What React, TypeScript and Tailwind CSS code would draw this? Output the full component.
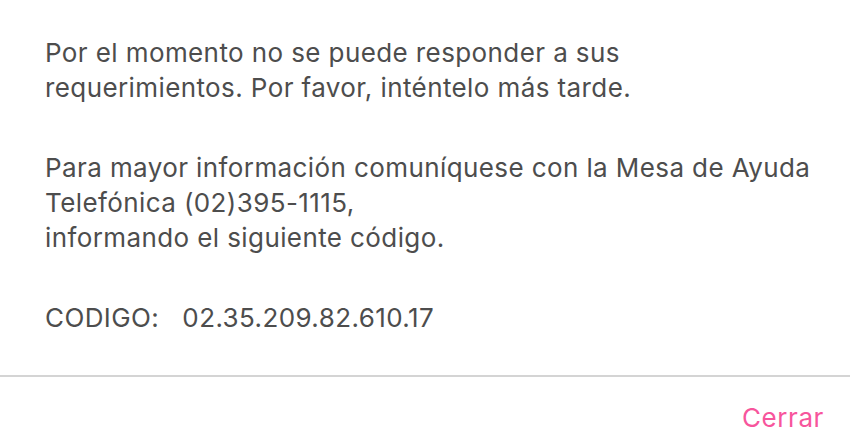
export default function App() {
  return (
    <div className="w-[850px] h-[446px] bg-white font-['Inter','Roboto',sans-serif] text-[#4d4d4d] tracking-[0.4px] flex flex-col">
      <div className="px-[45px] pt-[35px] text-[26px] leading-[35px] whitespace-nowrap">
        <p>
          Por el momento no se puede responder a sus
          <br />
          requerimientos. Por favor, inténtelo más tarde.
        </p>
        <p className="mt-[45px]">
          Para mayor información comuníquese con la Mesa de Ayuda
          <br />
          Telefónica (02)395-1115,
          <br />
          informando el siguiente código.
        </p>
        <p className="mt-[45px]">
          CODIGO:&nbsp;&nbsp;&nbsp;02.35.209.82.610.17
        </p>
      </div>
      <div className="mt-auto border-t-2 border-[#d4d4d4] h-[71px] flex items-center justify-end pr-[26px] pt-[11px]">
        <button className="text-[26px] tracking-[0.6px] text-[#f7559c]">Cerrar</button>
      </div>
    </div>
  );
}
